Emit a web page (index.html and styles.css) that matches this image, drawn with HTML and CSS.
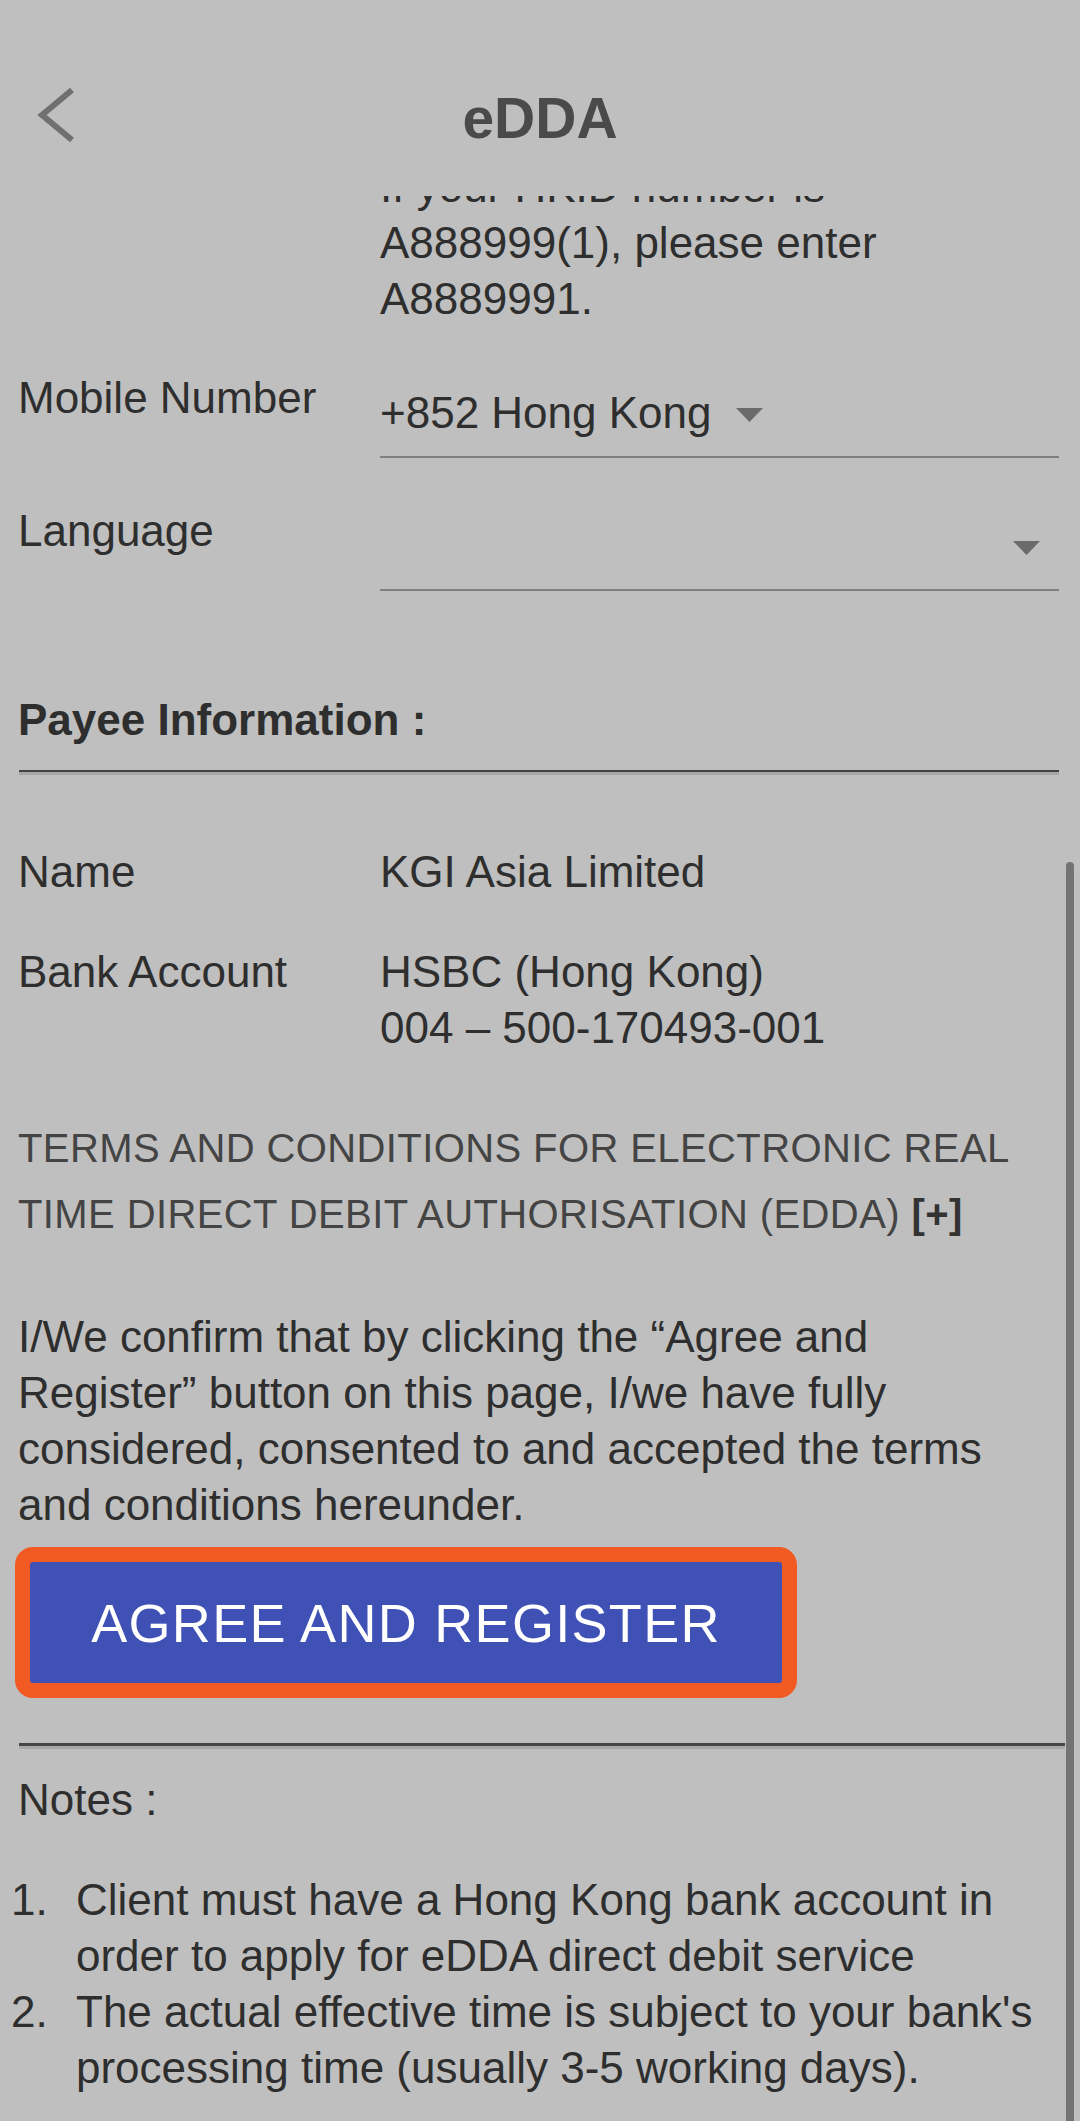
FILE: index.html
```html
<!DOCTYPE html>
<html lang="en">
<head>
    <meta charset="UTF-8">
    <meta name="viewport" content="width=device-width, initial-scale=1.0">
    <title>eDDA</title>
    <link rel="stylesheet" href="styles.css">
</head>
<body>

<div class="screen">
    <!-- top bar -->
    <div class="topbar">
        <a class="back" href="#">
            <svg width="44" height="64" viewBox="0 0 44 64">
                <polyline points="36,7 6,32 36,57" fill="none" stroke="#707070" stroke-width="6"/>
            </svg>
        </a>
        <h1>eDDA</h1>
        <span></span>
    </div>

    <div class="content">
        <div class="scroll">
            <div class="row hint-row">
                <span></span>
                <p class="hint">If your HKID number is<br>A888999(1), please enter<br>A8889991.</p>
            </div>

            <div class="row field-row mobile-row">
                <label>Mobile Number</label>
                <div class="select">
                    <span>+852 Hong Kong</span>
                    <svg class="caret" width="27" height="14" viewBox="0 0 27 14"><polygon points="0,0 27,0 13.5,14" fill="#6b6b6b"/></svg>
                </div>
            </div>

            <div class="row field-row lang-row">
                <label>Language</label>
                <div class="select select-empty">
                    <svg class="caret" width="27" height="14" viewBox="0 0 27 14"><polygon points="0,0 27,0 13.5,14" fill="#6b6b6b"/></svg>
                </div>
            </div>

            <h2 class="section-title">Payee Information :</h2>
            <div class="divider"></div>

            <div class="row info-row name-row">
                <span>Name</span>
                <span>KGI Asia Limited</span>
            </div>
            <div class="row info-row bank-row">
                <span>Bank Account</span>
                <span>HSBC (Hong Kong)<br>004 – 500-170493-001</span>
            </div>

            <p class="terms">TERMS AND CONDITIONS FOR ELECTRONIC REAL TIME DIRECT DEBIT AUTHORISATION (EDDA) <strong>[+]</strong></p>

            <p class="confirm">I/We confirm that by clicking the “Agree and Register” button on this page, I/we have fully considered, consented to and accepted the terms and conditions hereunder.</p>

            <div class="btn-wrap">
                <button class="btn-agree">AGREE AND REGISTER</button>
            </div>

            <div class="rule"></div>

            <p class="notes-title">Notes :</p>
            <ol class="notes">
                <li><span class="num">1.</span><span>Client must have a Hong Kong bank account in order to apply for eDDA direct debit service</span></li>
                <li><span class="num">2.</span><span>The actual effective time is subject to your bank's processing time (usually 3-5 working days).</span></li>
            </ol>
        </div>
        <div class="scrollbar"></div>
    </div>
</div>

</body>
</html>
```

FILE: styles.css
```css
body {
    margin: 0;
    padding: 0;
    background-color: #bfbfbf;
    font-family: "Liberation Sans", Arial, sans-serif;
    color: #2e2e2e;
    overflow: hidden;
}
.screen {
    width: 1080px;
    height: 2121px;
    overflow: hidden;
    position: relative;
}
.topbar {
    height: 196px;
    box-sizing: border-box;
    padding-top: 40px;
    display: grid;
    grid-template-columns: 1fr auto 1fr;
    align-items: center;
    background-color: #bfbfbf;
    position: relative;
    z-index: 2;
}
.back {
    justify-self: start;
    padding-left: 36px;
    margin-top: -6px;
    display: flex;
}
.topbar h1 {
    margin: 0;
    font-size: 57px;
    line-height: 64px;
    font-weight: bold;
    color: #4a4a4a;
}
.content {
    height: 1925px;
    overflow: hidden;
}
.scroll {
    margin-top: -37px;
    padding: 0 21px 0 18px;
    font-size: 44px;
    line-height: 56px;
}
.row {
    display: grid;
    grid-template-columns: 362px 1fr;
}
.hint {
    margin: 0;
}
.mobile-row {
    margin-top: 43px;
}
.lang-row {
    margin-top: 45px;
}
.select {
    display: flex;
    align-items: center;
    height: 56px;
    padding: 15px 0;
    border-bottom: 2px solid #808080;
}
.select-empty {
    justify-content: flex-end;
}
.caret {
    margin-left: 24px;
    margin-top: 4px;
}
.select-empty .caret {
    margin-right: 19px;
}
.section-title {
    margin: 101px 0 0;
    font-size: 44px;
    line-height: 56px;
    font-weight: bold;
}
.divider {
    margin-top: 22px;
    margin-left: 1px;
    border-top: 2px solid #424242;
    border-bottom: 3px solid #a7a7a7;
}
.name-row {
    margin-top: 69px;
}
.bank-row {
    margin-top: 44px;
}
.terms {
    margin: 59px 0 0;
    font-size: 40px;
    line-height: 66px;
    letter-spacing: 0.4px;
    color: #444;
}
.terms strong {
    color: #333;
}
.confirm {
    margin: 62px 0 0;
    padding-right: 15px;
}
.btn-wrap {
    margin-top: 14px;
    margin-left: -3px;
    width: fit-content;
    border: 15px solid #f15a22;
    border-radius: 18px;
    background-color: #f15a22;
}
.btn-agree {
    display: block;
    width: 752px;
    height: 121px;
    padding: 0;
    border: none;
    border-radius: 3px;
    background-color: #3f51b5;
    color: #fff;
    font-family: "Liberation Sans", Arial, sans-serif;
    font-size: 54px;
    letter-spacing: 1.3px;
    cursor: pointer;
}
.rule {
    margin-top: 45px;
    margin-left: 1px;
    margin-right: -6px;
    border-top: 3px solid #474747;
    border-bottom: 3px solid #a9a9a9;
}
.notes-title {
    margin: 23px 0 0;
}
.notes {
    list-style: none;
    margin: 44px 0 0 -7px;
    padding: 0;
}
.notes li {
    display: flex;
}
.notes .num {
    flex: 0 0 65px;
}
.scrollbar {
    position: absolute;
    left: 1066px;
    top: 862px;
    width: 8px;
    height: 1300px;
    border-radius: 4px;
    background-color: #737373;
}
```
